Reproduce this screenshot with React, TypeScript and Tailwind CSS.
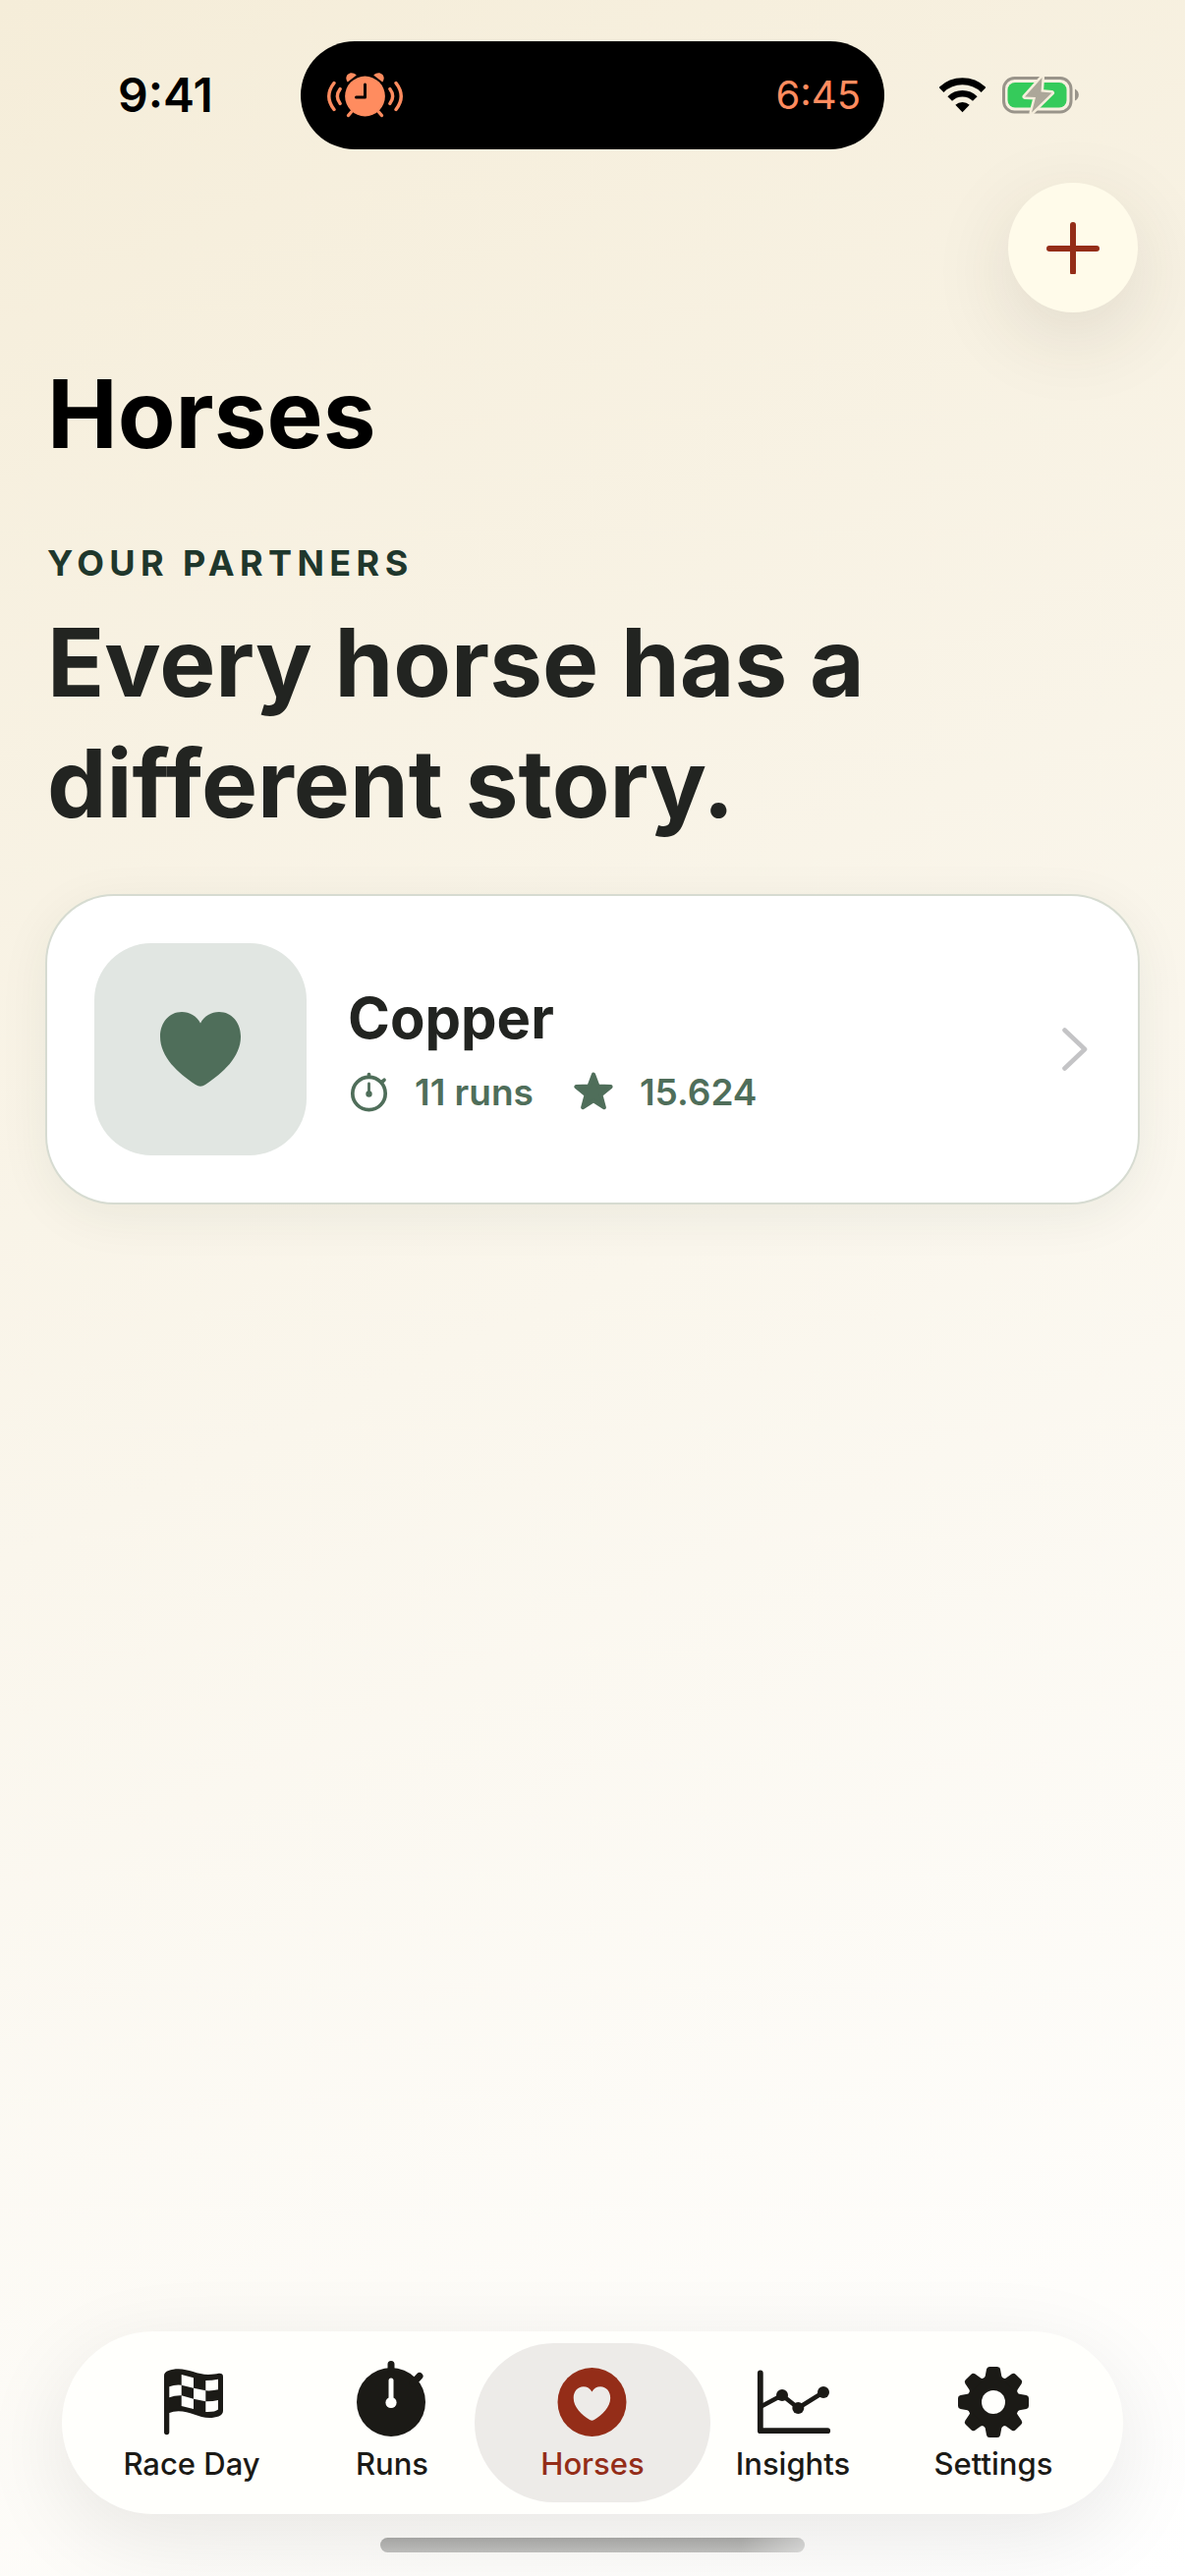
import type { ReactNode } from "react";
import { clsx } from "clsx";

const HEART_PATH =
  "M41 11.5C37 4 30 0 22 0C9 0 0 11 0 25C0 46 18 62 36 74Q41 77.5 46 74C64 62 82 46 82 25C82 11 73 0 60 0C52 0 45 4 41 11.5Z";

/* Status bar icons */
const AlarmIcon = () => (
  <svg viewBox="0 0 77 46" className="h-[46px] w-[77px]" aria-hidden="true">
    <g fill="none" stroke="#ff8c5f" strokeWidth="3.4" strokeLinecap="round">
      <path d="M7 10.5Q-3.5 24 7 37.5" />
      <path d="M13.2 16.5Q7.5 24 13.2 31.5" />
      <path d="M70 10.5Q80.5 24 70 37.5" />
      <path d="M63.8 16.5Q69.5 24 63.8 31.5" />
      <path d="M24.5 40L21.5 43.5M52.5 40L55.5 43.5" />
    </g>
    <circle cx="38.5" cy="24" r="20.4" fill="#ff8c5f" />
    <path d="M20.8 9.5C16 3 24-3.5 29.8 2.5Z" fill="#ff8c5f" />
    <path d="M56.2 9.5C61 3 53-3.5 47.2 2.5Z" fill="#ff8c5f" />
    <path
      d="M38.5 12V25H29.5"
      fill="none"
      stroke="#000"
      strokeWidth="3"
      strokeLinecap="round"
      strokeLinejoin="round"
    />
  </svg>
);

const WifiIcon = () => (
  <svg viewBox="0 0 47 36" className="h-9 w-[47px]" aria-hidden="true">
    <g fill="none" stroke="#000">
      <path d="M2 12.5A31 31 0 0 1 45 12.5" strokeWidth="7" />
      <path d="M10.7 21.5A18 18 0 0 1 36.3 21.5" strokeWidth="6.5" />
    </g>
    <path d="M16.3 27.8A10.5 10.5 0 0 1 30.7 27.8L23.5 35.3Z" />
  </svg>
);

const BatteryIcon = () => (
  <svg viewBox="0 0 78 38" className="h-[38px] w-[78px]" aria-hidden="true">
    <rect x="1.5" y="1.5" width="68.5" height="34.5" rx="11" fill="none" stroke="#99948a" strokeWidth="3" />
    <path d="M74 12.5Q77.8 14.5 77.8 18.5T74 24.5Z" fill="#99948a" />
    <rect x="5.5" y="6" width="60" height="25.5" rx="7.5" fill="#35cb5b" />
    <path
      d="M40.5 1L23 20.5L34 21L30 36.5L50.5 16.5L39.5 15.5Z"
      fill="#aca799"
      stroke="#f6eedc"
      strokeWidth="5"
      strokeLinejoin="round"
      paintOrder="stroke"
    />
  </svg>
);

/* Card icons */
const StopwatchIcon = () => (
  <svg viewBox="0 0 42 42" className="size-[42px]" aria-hidden="true">
    <g fill="none" stroke="#4f6e5a" strokeWidth="3.7" strokeLinecap="round">
      <circle cx="21.5" cy="22" r="16.7" />
      <path d="M21.5 2.5V5M35 10L37 8.3" />
      <path d="M21.5 12V22" strokeWidth="2.8" />
    </g>
    <circle cx="21.5" cy="22.5" r="3.2" fill="#4f6e5a" />
  </svg>
);

const StarIcon = () => (
  <svg viewBox="-21 -21 42 42" className="size-[42px]" aria-hidden="true">
    <path
      d="M0-18.5L4.5-6.5L17.6-5.9L7.5 2.5L10.9 15.2L0 8.2L-10.9 15.2L-7.5 2.5L-17.6-5.9L-4.5-6.5Z"
      fill="#4f6e5a"
      stroke="#4f6e5a"
      strokeWidth="4"
      strokeLinejoin="round"
    />
  </svg>
);

const ChevronIcon = () => (
  <svg viewBox="0 0 26 44" className="h-11 w-[26px]" aria-hidden="true">
    <path
      d="M2.5 2.5L23 22L2.5 41.5"
      fill="none"
      stroke="#c4c4c6"
      strokeWidth="4.6"
      strokeLinecap="round"
      strokeLinejoin="round"
    />
  </svg>
);

/* Tab bar icons, all drawn on a 72px box */
const FlagTabIcon = () => (
  <svg viewBox="0 0 72 72" className="size-[72px]" aria-hidden="true">
    <path
      d="M8 9C8 4.5 15 2.3 22.7 2.3C33 2.3 42 8 53 8C58 8 60.5 7.5 63.7 6.8Q68 6.5 68 10V45C68 50 61 52 54.3 52C43 52 34 45.3 22.7 45.3Q17 45.3 13.3 47V66.5A2.65 2.65 0 0 1 8 66.5Z"
      fill="#1b1a16"
    />
    <g fill="#fffffc">
      <path d="M25.7 8L38 11.3V21.7L25.7 18.7Z" />
      <path d="M50.3 14Q57 14 63 12.7V23.3Q57 24.8 50.3 24.3Z" />
      <path d="M13.3 20.3Q19 18 25.7 18.7V29.3Q19 29 13.3 31.3Z" />
      <path d="M38 21.7L50.3 24.3V35.3L38 32.7Z" />
      <path d="M25.7 29.3L38 32.7V43L25.7 40Z" />
      <path d="M50.3 35.3Q57 35.5 63 34V43.5Q60 46.3 50.3 46Z" />
    </g>
  </svg>
);

const StopwatchTabIcon = () => (
  <svg viewBox="0 0 72 72" className="size-[72px] overflow-visible" aria-hidden="true">
    <circle cx="35" cy="36" r="35" fill="#1b1a16" />
    <path d="M35-2.5V4M57 17L64 9.5" stroke="#1b1a16" strokeWidth="7" strokeLinecap="round" />
    <path d="M35 14V36" stroke="#fffffc" strokeWidth="5" strokeLinecap="round" />
    <circle cx="35" cy="36.5" r="5.6" fill="#fffffc" />
  </svg>
);

const HeartTabIcon = () => (
  <svg viewBox="0 0 72 72" className="size-[72px]" aria-hidden="true">
    <circle cx="35.5" cy="36" r="35" fill="#942d18" />
    <path d={HEART_PATH} transform="translate(16.7 20.2) scale(.457)" fill="#edebe8" />
  </svg>
);

const ChartTabIcon = () => (
  <svg viewBox="0 0 72 72" className="size-[72px] overflow-visible" aria-hidden="true">
    <g fill="none" stroke="#1b1a16" strokeLinecap="round" strokeLinejoin="round">
      <path d="M2.8 6.5V65.2H71.2" strokeWidth="5.8" />
      <path d="M3.5 40.5L25 29L41.3 42L67 26" strokeWidth="4.5" />
    </g>
    <g fill="#1b1a16">
      <circle cx="25" cy="29" r="6" />
      <circle cx="41.3" cy="42" r="6" />
      <circle cx="67" cy="26" r="6" />
    </g>
  </svg>
);

const GearTabIcon = () => (
  <svg viewBox="-36 -36 72 72" className="size-[72px]" aria-hidden="true">
    <circle r="26.5" fill="#1b1a16" />
    {[0, 45, 90, 135, 180, 225, 270, 315].map((angle) => (
      <path
        key={angle}
        d="M-12-23Q-8.8-24-8.3-26.5L-7-33.5Q-6.5-36-4-36H4Q6.5-36 7-33.5L8.3-26.5Q8.8-24 12-23Z"
        transform={`rotate(${angle})`}
        fill="#1b1a16"
      />
    ))}
    <circle r="12" fill="#fffffc" />
  </svg>
);

interface Tab {
  label: string;
  icon: ReactNode;
  active?: boolean;
}

const tabs: Tab[] = [
  { label: "Race Day", icon: <FlagTabIcon /> },
  { label: "Runs", icon: <StopwatchTabIcon /> },
  { label: "Horses", icon: <HeartTabIcon />, active: true },
  { label: "Insights", icon: <ChartTabIcon /> },
  { label: "Settings", icon: <GearTabIcon /> },
];

const horses = [{ name: "Copper", runs: 11, best: "15.624" }];

const StatusBar = () => (
  <div className="grid grid-cols-[1fr_594px_1fr] items-center pt-[42px]">
    <div className="pl-[120px] text-[48px] leading-[60px] font-semibold">9:41</div>
    <div className="flex h-[110px] items-center justify-between rounded-full bg-black pr-6 pl-[27px] text-[#ff8c5f]">
      <AlarmIcon />
      <span className="text-[40px] leading-[48px]">6:45</span>
    </div>
    <div className="flex items-center gap-[17px] pl-14">
      <WifiIcon />
      <BatteryIcon />
    </div>
  </div>
);

const HorseCard = ({ name, runs, best }: { name: string; runs: number; best: string }) => (
  <a
    href="#copper"
    className="flex items-center rounded-[68px] bg-white py-12 pr-[51px] pl-12 shadow-[0_12px_54px_rgba(30,50,40,0.07)] ring-2 ring-[#d6dbd1]"
  >
    <div className="flex size-[216px] items-center justify-center rounded-[58px] bg-[#e1e6e2]">
      <svg viewBox="0 0 82 77" className="h-[77px] w-[82px]" aria-hidden="true">
        <path d={HEART_PATH} fill="#4f6e5a" />
      </svg>
    </div>
    <div className="ml-[42px] flex flex-1 flex-col gap-4">
      <h3 className="text-[58px] leading-[72px] font-bold text-[#222421]">{name}</h3>
      <div className="flex items-center gap-10 text-[37px] leading-[48px] font-semibold text-[#4f6e5a]">
        <span className="flex items-center gap-[26px]">
          <StopwatchIcon />
          {runs} runs
        </span>
        <span className="flex items-center gap-[26px]">
          <StarIcon />
          {best}
        </span>
      </div>
    </div>
    <ChevronIcon />
  </a>
);

const TabBar = () => (
  <nav className="mx-[63px] grid grid-cols-5 rounded-full bg-[#fffffc] px-[30px] py-3 shadow-[0_24px_90px_rgba(0,0,0,0.09)]">
    {tabs.map(({ label, icon, active }) => (
      <button
        key={label}
        type="button"
        aria-current={active ? "page" : undefined}
        className={clsx(
          "flex flex-col items-center gap-[9px] rounded-full pt-6 pb-[21px] text-[31px] leading-9 font-medium whitespace-nowrap",
          active ? "-mx-[18px] bg-[#edebe8] text-[#942d18]" : "text-[#1b1a16]"
        )}
      >
        {icon}
        {label}
      </button>
    ))}
  </nav>
);

export default function App() {
  return (
    <div className="flex min-h-screen flex-col bg-[linear-gradient(155deg,#f5edd9,#ffffff)] font-['Inter','Liberation_Sans',sans-serif] text-black">
      <StatusBar />
      <main className="flex-1 px-12 pt-[34px]">
        <div className="flex justify-end">
          <button
            type="button"
            aria-label="Add horse"
            className="flex size-[132px] items-center justify-center rounded-full bg-[#fffbea] shadow-[0_24px_84px_rgba(60,50,30,0.12)]"
          >
            <svg viewBox="0 0 54 54" className="size-[54px]" aria-hidden="true">
              <path d="M27 4V52M3 28H51" stroke="#942d18" strokeWidth="6" strokeLinecap="round" />
            </svg>
          </button>
        </div>
        <h1 className="mt-[43px] text-[96px] leading-[120px] font-bold">Horses</h1>
        <p className="mt-[68px] text-[36px] leading-[48px] font-bold tracking-[0.15em] text-[#1f372c] uppercase">
          Your partners
        </p>
        <h2 className="mt-4 max-w-[900px] text-[96px] leading-[123px] font-bold text-[#222421]">
          Every horse has a different story.
        </h2>
        <div className="mt-[53px] flex flex-col gap-9">
          {horses.map((horse) => (
            <HorseCard key={horse.name} {...horse} />
          ))}
        </div>
      </main>
      <TabBar />
      <div className="mt-6 mb-6 h-[15px] w-[432px] self-center rounded-full bg-[linear-gradient(90deg,transparent_85%,#ffffff66),linear-gradient(#a4a4a2,#bcbcba)]" />
    </div>
  );
}
